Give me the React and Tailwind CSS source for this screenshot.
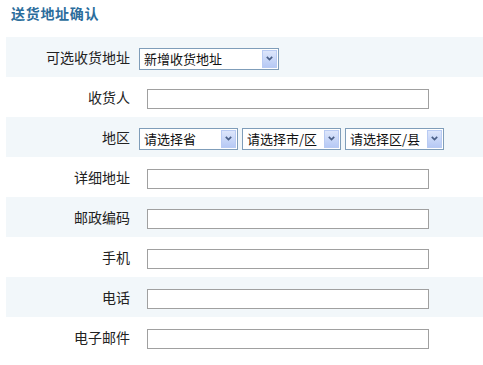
import React from "react";

function Arrow() {
  return (
    <div className="ml-auto mr-[1px] w-[15px] h-[18px] border border-[#b9cbf3] bg-gradient-to-b from-[#dde6fb] to-[#b6c9f5] flex items-center justify-center">
      <svg width="7" height="5" viewBox="0 0 7 5">
        <path d="M0.8 0.8 L3.5 3.6 L6.2 0.8" fill="none" stroke="#4a5f86" strokeWidth="1.7" />
      </svg>
    </div>
  );
}

function Select({ text, w }) {
  return (
    <div className={`${w} h-[22px] mt-[3px] border border-[#7f9db9] bg-white flex items-center`}>
      <span className="pl-[4px] text-[13px] leading-[16px] text-[#111] whitespace-nowrap">{text}</span>
      <Arrow />
    </div>
  );
}

function Input() {
  return <div className="ml-[17px] mt-[4px] w-[282px] h-[20px] border border-[#a0a0a0] bg-white" />;
}

function Row({ label, shade, children }) {
  return (
    <div className={`flex items-center h-[40px] ${shade ? "bg-[#f2f7fa]" : ""}`}>
      <div className="w-[124px] text-right text-[14px] leading-[16px] text-[#222]">{label}</div>
      {children}
    </div>
  );
}

export default function App() {
  return (
    <div className="w-[483px] h-[365px] bg-white font-['Noto_Sans_CJK_SC','Liberation_Sans',sans-serif]">
      <div className="pl-[11px] pt-[5px] h-[37px] text-[14px] leading-[16px] font-bold text-[#2b6d9c] tracking-[0.7px]">
        送货地址确认
      </div>
      <div className="ml-[6px]">
        <Row label="可选收货地址" shade>
          <div className="ml-[9px]">
            <Select text="新增收货地址" w="w-[140px]" />
          </div>
        </Row>
        <Row label="收货人">
          <Input />
        </Row>
        <Row label="地区" shade>
          <div className="ml-[9px] flex gap-[4px]">
            <Select text="请选择省" w="w-[99px]" />
            <Select text="请选择市/区" w="w-[99px]" />
            <Select text="请选择区/县" w="w-[99px]" />
          </div>
        </Row>
        <Row label="详细地址">
          <Input />
        </Row>
        <Row label="邮政编码" shade>
          <Input />
        </Row>
        <Row label="手机">
          <Input />
        </Row>
        <Row label="电话" shade>
          <Input />
        </Row>
        <Row label="电子邮件">
          <Input />
        </Row>
      </div>
    </div>
  );
}
